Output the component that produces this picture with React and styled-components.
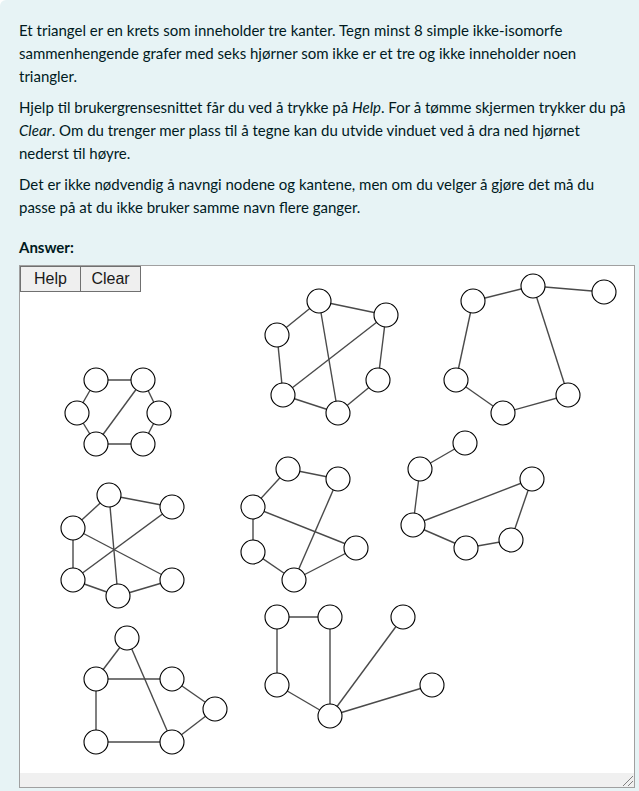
import React from 'react';
import styled, { createGlobalStyle } from 'styled-components';

const Global = createGlobalStyle`
  html, body { margin: 0; padding: 0; background: #ffffff; }
  body { font-family: Lato, "Liberation Sans", sans-serif; }
`;

const Panel = styled.div`
  box-sizing: border-box;
  min-height: 791px;
  background: #e7f3f5;
  color: #001a1e;
  padding: 19px 4px 3px 19px;
  border-top-left-radius: 6px;
`;

const Text = styled.p`
  margin: 0 0 8px;
  font-size: 15px;
  line-height: 23px;
  white-space: nowrap;
`;

const Prompt = styled.div`
  margin: 17px 0 6px;
  font-size: 15px;
  line-height: 23px;
  font-weight: 700;
`;

const Canvas = styled.div`
  box-sizing: border-box;
  width: 616px;
  height: 523px;
  border: 1px solid #a0a0a0;
  background: #ffffff;
  display: flex;
  flex-direction: column;
`;

const DrawArea = styled.div`
  position: relative;
  flex: 1;
`;

const Toolbar = styled.div`
  position: absolute;
  top: 0;
  left: 0;
  display: flex;
  height: 26px;
`;

const ToolButton = styled.button`
  box-sizing: border-box;
  width: ${p => (p.$first ? 61 : 60)}px;
  height: 26px;
  margin: 0;
  padding: 0;
  border: 1px solid #707070;
  border-left: ${p => (p.$first ? '1px solid #707070' : 'none')};
  background: #efefef;
  color: #1a1a1a;
  font-family: "Liberation Sans", Arial, sans-serif;
  font-size: 16px;
  line-height: 24px;
`;

const Drawing = styled.svg`
  display: block;
  width: 100%;
  height: 100%;
`;

const ScrollStrip = styled.div`
  flex: none;
  height: 14px;
  background: #f0f0f0;
  display: flex;
  justify-content: flex-end;
  align-items: flex-end;
`;

const graphs = [
  {
    n: { a: [96, 380], b: [143, 380], c: [77, 413], d: [159, 413], e: [96, 444], f: [143, 444] },
    e: ['ab', 'ac', 'bd', 'be', 'ce', 'df', 'ef'],
  },
  {
    n: { a: [319, 301], b: [277, 335], c: [386, 315], d: [283, 395], e: [338, 413], f: [378, 380] },
    e: ['ab', 'ac', 'ae', 'bd', 'dc', 'de', 'ef', 'fc'],
  },
  {
    n: { a: [473, 301], b: [533, 286], c: [604, 292], d: [456, 380], e: [503, 413], f: [568, 395] },
    e: ['ab', 'bc', 'bf', 'ad', 'de', 'ef'],
  },
  {
    n: { a: [109, 495], b: [172, 507], c: [73, 528], d: [73, 580], e: [118, 596], f: [172, 580] },
    e: ['ab', 'ac', 'ae', 'cd', 'cf', 'db', 'de', 'ef'],
  },
  {
    n: { a: [288, 469], b: [338, 479], c: [253, 507], d: [253, 552], e: [294, 580], f: [356, 548] },
    e: ['ab', 'ac', 'cd', 'cf', 'be', 'de', 'ef'],
  },
  {
    n: { a: [465, 443], b: [420, 469], c: [532, 479], d: [413, 525], e: [466, 548], f: [511, 540] },
    e: ['ab', 'bd', 'dc', 'de', 'ef', 'fc'],
  },
  {
    n: { a: [127, 638], b: [96, 679], c: [172, 679], d: [215, 709], e: [96, 742], f: [172, 742] },
    e: ['ab', 'af', 'bc', 'cd', 'be', 'ef', 'df'],
  },
  {
    n: { a: [277, 617], b: [330, 617], c: [403, 617], d: [277, 685], e: [330, 716], f: [432, 685] },
    e: ['ab', 'ad', 'be', 'de', 'ec', 'ef'],
  },
];

function Graph({ g }) {
  return (
    <g>
      {g.e.map(k => {
        const p = g.n[k[0]];
        const q = g.n[k[1]];
        return <line key={k} x1={p[0]} y1={p[1]} x2={q[0]} y2={q[1]} stroke="#4a4a4a" strokeWidth="1.4" />;
      })}
      {Object.entries(g.n).map(([k, p]) => (
        <circle key={k} cx={p[0]} cy={p[1]} r="12" fill="#ffffff" stroke="#000000" strokeWidth="1.1" />
      ))}
    </g>
  );
}

export default function App() {
  return (
    <>
      <Global />
      <Panel>
        <Text>
          Et triangel er en krets som inneholder tre kanter. Tegn minst 8 simple ikke-isomorfe
          <br />
          sammenhengende grafer med seks hjørner som ikke er et tre og ikke inneholder noen
          <br />
          triangler.
        </Text>
        <Text>
          Hjelp til brukergrensesnittet får du ved å trykke på <i>Help</i>. For å tømme skjermen trykker du på
          <br />
          <i>Clear</i>. Om du trenger mer plass til å tegne kan du utvide vinduet ved å dra ned hjørnet
          <br />
          nederst til høyre.
        </Text>
        <Text>
          Det er ikke nødvendig å navngi nodene og kantene, men om du velger å gjøre det må du
          <br />
          passe på at du ikke bruker samme navn flere ganger.
        </Text>
        <Prompt>Answer:</Prompt>
        <Canvas>
          <DrawArea>
            <Drawing viewBox="20 266 614 507" preserveAspectRatio="none">
              {graphs.map((g, i) => (
                <Graph key={i} g={g} />
              ))}
            </Drawing>
            <Toolbar>
              <ToolButton $first>Help</ToolButton>
              <ToolButton>Clear</ToolButton>
            </Toolbar>
          </DrawArea>
          <ScrollStrip>
            <svg width="13" height="13" viewBox="0 0 13 13">
              <line x1="12" y1="2" x2="2" y2="12" stroke="#808080" strokeWidth="1" />
              <line x1="12" y1="7" x2="7" y2="12" stroke="#808080" strokeWidth="1" />
            </svg>
          </ScrollStrip>
        </Canvas>
      </Panel>
    </>
  );
}
